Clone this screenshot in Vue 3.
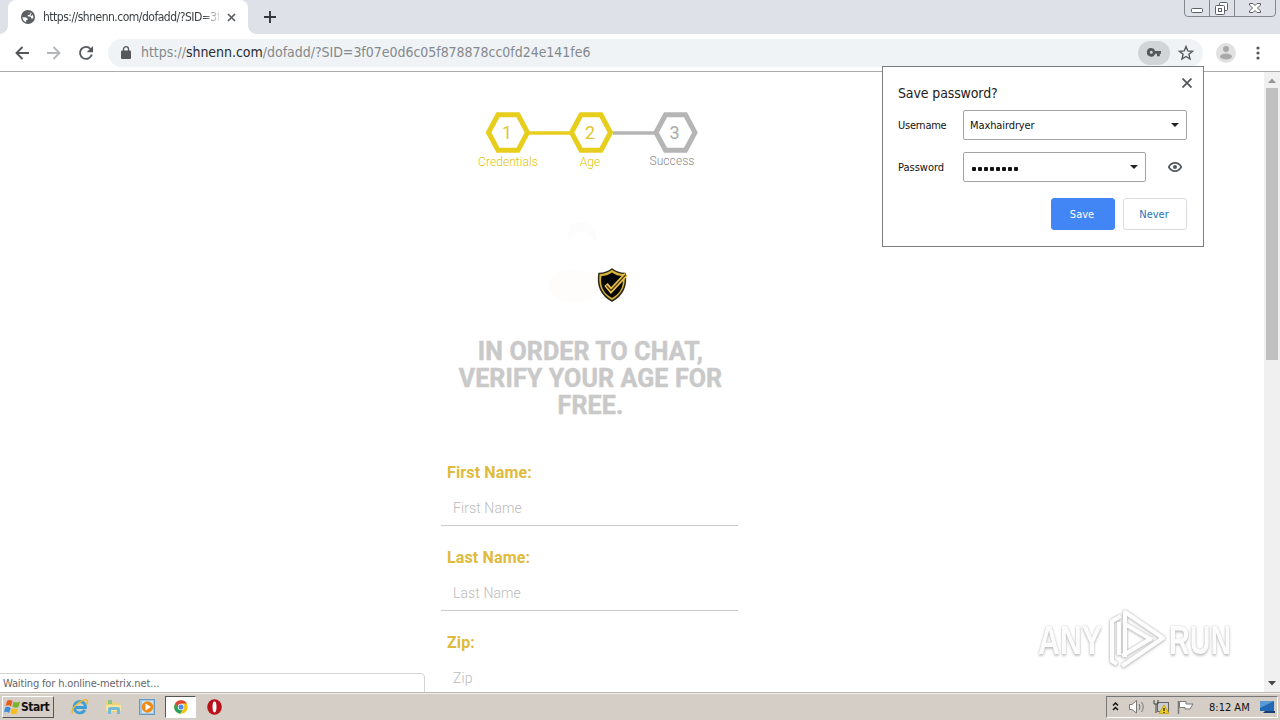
<script setup>
const steps = [
  { n: 1, label: 'Credentials', x: 22, done: true },
  { n: 2, label: 'Age', x: 105, done: true },
  { n: 3, label: 'Success', x: 189.5, done: false },
]
const fields = ['First Name', 'Last Name', 'Zip']
</script>

<template>
  <div class="desktop">
    <header class="tabs">
      <div class="tab">
        <svg class="globe" width="14" height="14" viewBox="0 0 14 14"><circle cx="7" cy="7" r="7" fill="#5a5e62" /><path d="M1.500 7.200H4.500L6.500 8.300V10H5.200V12.300Q1.800 11 1.500 7.200ZM6 2.200H9.600V3.600L8.200 5H6.800V6.400H9.400L10.300 8.500H12.200Q12.600 6.600 11.800 4.800L10.600 6 9.300 5.200 10.800 3.300Q8.800 1.500 6 2.200Z" fill="#fff" /></svg>
        <span class="tab-title">https://shnenn.com/dofadd/?SID=3f</span>
        <svg class="tab-x" width="9" height="9" viewBox="0 0 9 9"><path d="M1 1 8 8M8 1 1 8" stroke="#5a5e62" stroke-width="1.7" /></svg>
      </div>
      <svg class="plus" width="12" height="12" viewBox="0 0 12 12"><path d="M6 0V12M0 6H12" stroke="#34383d" stroke-width="1.9" /></svg>
      <svg class="winbtns" width="94" height="18" viewBox="0 0 94 18" fill="none">
        <path d="M1.500 0V13Q1.500 16.500 5 16.500H89Q92.500 16.500 92.500 13V0M26.500 0V16M51.500 0V16" stroke="#83888f" />
        <rect x="8.500" y="8.500" width="11" height="4" rx="1" fill="#fff" stroke="#5b6068" />
        <rect x="36.500" y="2.500" width="8" height="8" rx="1" fill="#fff" stroke="#5b6068" />
        <rect x="32.500" y="5.500" width="9" height="9" rx="1" fill="#fff" stroke="#5b6068" /><rect x="35.500" y="8.500" width="3" height="3" stroke="#5b6068" />
        <path d="M66.500 3.500H70L72 5.500 74 3.500H77.500V5L74.500 8 77.500 11V12.500H74L72 10.500 70 12.500H66.500V11L69.500 8 66.500 5Z" fill="#fff" stroke="#5b6068" />
      </svg>
    </header>

    <div class="toolbar">
      <svg class="nav" width="94" height="20" viewBox="0 0 94 20" fill="none" stroke-width="1.9">
        <path d="M15 10H2.500M8.500 4 2.500 10 8.500 16" stroke="#54585c" />
        <path d="M33 10H45.500M39.500 4 45.500 10 39.500 16" stroke="#b4b6b8" />
        <path d="M76.600 6A6 6 0 1 0 77.800 11.500" stroke="#54585c" /><path d="M79 3V9.300H72.700Z" fill="#54585c" />
      </svg>
      <div class="omni">
        <svg class="lock" width="10" height="13" viewBox="0 0 10 13"><rect y="4.500" width="10" height="8.500" rx="1" fill="#54585c" /><path d="M2.500 5V3.200A2.500 2.500 0 0 1 7.500 3.200V5" fill="none" stroke="#54585c" stroke-width="1.300" /></svg>
        <span class="url">https://<b>shnenn.com</b>/dofadd/?SID=3f07e0d6c05f878878cc0fd24e141fe6</span>
        <span class="key"><svg width="14" height="9" viewBox="0 0 14 9"><path fill-rule="evenodd" d="M4.300 0A4.300 4.300 0 1 0 8.200 5.700H10V8.300H12.800V5.700H14V2.900H8.200A4.300 4.300 0 0 0 4.300 0ZM4.300 2.800A1.500 1.500 0 1 1 4.300 5.800 1.500 1.500 0 1 1 4.300 2.800Z" fill="#54585c" /></svg></span>
        <svg class="star" width="16" height="16" viewBox="0 0 16 16"><path d="M8 1.500 9.800 5.900 14.500 6.300 10.900 9.300 12 14 8 11.500 4 14 5.100 9.300 1.500 6.300 6.200 5.900Z" fill="none" stroke="#54585c" stroke-width="1.400" /></svg>
      </div>
      <svg class="avatar" width="20" height="20" viewBox="0 0 20 20"><circle cx="10" cy="10" r="10" fill="#e1e1e1" /><circle cx="10" cy="6" r="3" fill="#a9a9a9" /><ellipse cx="10" cy="13.500" rx="6" ry="3" fill="#a9a9a9" /></svg>
      <svg class="dots" width="4" height="14" viewBox="0 0 4 14" fill="#54585c"><circle cx="2" cy="2" r="1.600" /><circle cx="2" cy="7" r="1.600" /><circle cx="2" cy="12" r="1.600" /></svg>
    </div>

    <div class="view">
      <main class="page">
        <svg class="steps" width="212" height="42" viewBox="0 0 212 42">
          <path d="M43 21H85" stroke="#e8ce1c" stroke-width="3.600" /><path d="M127 21H169" stroke="#b5b5b5" stroke-width="3.600" />
          <g v-for="s in steps" :key="s.n" :transform="`translate(${s.x} 20.500)`">
            <path d="M-19.500 0-10-17.700H10L19.500 0 10 17.700H-10Z" fill="#fff" :stroke="s.done ? '#e8ce1c' : '#b5b5b5'" stroke-width="5" />
            <text x="-1" y="6.300" text-anchor="middle" :fill="s.done ? '#dfc72c' : '#aaa'">{{ s.n }}</text>
          </g>
        </svg>
        <div class="labels"><span v-for="s in steps" :key="s.n" :class="{ todo: !s.done }">{{ s.label }}</span></div>
        <svg class="badge" width="90" height="90" viewBox="0 0 90 90">
          <path d="M18 29Q20 8 32 10Q46 8 48 29L44 27Q33 12 22 27Z" fill="#fcfcfc" />
          <ellipse cx="25" cy="74" rx="26" ry="17" fill="#fffdfb" />
          <path d="M63 57Q68 61 76 61.500Q79 80 63 89Q47 80 50 61.500Q58 61 63 57Z" fill="#d9b43b" stroke="#2b2618" stroke-width="1.500" />
          <path d="M63 60.500Q68 64 73.500 64Q76 79 63 86Q50 79 52.500 64Q58 64 63 60.500Z" fill="#050505" />
          <path d="M57 72.500 62 78.500 77 62.500" fill="none" stroke="#edc34b" stroke-width="4.500" /><path d="M57.500 73.500 62 78.500 77 62.500" fill="none" stroke="#4c3b13" stroke-width="1.200" />
        </svg>
        <h1>IN ORDER TO CHAT,<br />VERIFY YOUR AGE FOR<br />FREE.</h1>
        <div v-for="f in fields" :key="f" class="field">
          <label>{{ f }}:</label>
          <div class="input">{{ f }}</div>
        </div>
      </main>
      <div class="scroll">
        <svg width="16" height="16" viewBox="0 0 16 16"><path d="M4 11H12L8 6.500Z" fill="#969696" /></svg>
        <div class="thumb"></div>
        <svg class="down" width="16" height="17" viewBox="0 0 16 17"><path d="M4 6H12L8 10.500Z" fill="#484848" /></svg>
      </div>
      <div class="status">Waiting for h.online-metrix.net...</div>
      <div class="watermark">
        <span class="any">ANY</span>
        <svg width="60" height="66" viewBox="0 0 60 66" fill="none" stroke-linejoin="round">
          <g class="glow" stroke="#fdfdfd" stroke-width="4">
            <path d="M18 50V5L56 31 15 59" /><path d="M18 17 45 33" /><path d="M14 9 5 14V54L10 57" /><path d="M12 15V48" />
            <path d="M15 49 43 32" />
          </g>
        </svg>
        <span class="run">RUN</span>
      </div>
    </div>

    <footer class="taskbar">
      <div class="start">
        <svg width="17" height="16" viewBox="0 0 17 16"><path d="M3 2Q6 0 8.500 2L7 7.500Q4.500 5.500 1.500 7Z" fill="#e75d21" /><path d="M9.500 2.500Q12 4.500 16 2.500L14.500 8Q11 9.500 8.300 7.500Z" fill="#78b52d" /><path d="M1.200 8.500Q4 7 6.700 9L5 14Q2.500 12 0 13.500Z" fill="#3b8ede" /><path d="M7.800 9Q10.500 11 14 9.500L12.500 14.500Q9 16 6.200 14Z" fill="#f7bd20" /></svg>
        <span>Start</span>
      </div>
      <svg class="ti ie" width="18" height="18" viewBox="0 0 18 18" fill="none"><path d="M13.800 12A5.700 5.700 0 1 1 14.500 9.500H4" stroke="#3a9ed8" stroke-width="2.800" /><path d="M1.500 15.500C-1 10 13-1 16.500 2.500Q17 4 15.500 6" stroke="#ecb934" stroke-width="1.500" /></svg>
      <svg class="ti folder" width="17" height="18" viewBox="0 0 17 18"><path d="M1 3H7L8.500 5H15V14H1Z" fill="#ecd076" /><path d="M3 2H7V6H3Z" fill="#8ac486" /><path d="M1 7H16V13H1Z" fill="#f6e59c" /><path d="M3 16V11Q3 9 6 9H12Q15 9 15 11V16H12V12H6V16Z" fill="#73b9dc" /></svg>
      <svg class="ti media" width="17" height="17" viewBox="0 0 17 17"><rect x=".500" y=".500" width="15" height="15" fill="#9fc9e7" stroke="#659bc3" /><rect x="3" y="2" width="11" height="12" fill="#d3e6f2" /><circle cx="8.500" cy="8" r="5.800" fill="#ef8c18" /><path d="M6.500 4.500 12 8 6.500 11.500Z" fill="#fff" /></svg>
      <div class="active-app"><svg width="14" height="14" viewBox="0 0 14 14"><circle cx="7" cy="7" r="6.800" fill="#f6c51d" /><path d="M1.100 3.600A6.800 6.800 0 0 1 12.900 3.600H7L4.200 8.500Z" fill="#dc4437" /><path d="M1.100 3.600A6.800 6.800 0 0 0 6.200 13.800L9.500 8.500H4.100Z" fill="#28a15b" /><circle cx="7" cy="7" r="3.200" fill="#fff" /><circle cx="7" cy="7" r="2.500" fill="#4c8bea" /></svg></div>
      <svg class="ti" width="15" height="16" viewBox="0 0 15 16"><ellipse cx="7.500" cy="8" rx="7.300" ry="7.800" fill="#b9121b" /><ellipse cx="7.500" cy="8" rx="2" ry="5.400" fill="#fff" /></svg>
      <div class="tray">
        <svg width="92" height="18" viewBox="0 0 92 18" fill="none">
          <path d="M6 7.500 8.500 5 11 7.500M6 12 8.500 9.500 11 12" stroke="#111" stroke-width="1.500" />
          <path d="M22.500 6.500H25L29.500 2.500V15L25 11.500H22.500Z" fill="#fff" stroke="#777" /><path d="M32 6Q34 9 32 12M34.500 4Q38 9 34.500 14" stroke="#777" />
          <rect x="50.500" y="4.500" width="11" height="9" fill="#c9cdd0" stroke="#666" /><path d="M47 2V6H51V2M49 6V15" stroke="#444" /><path d="M52 15.500 57 7 62 15.500Z" fill="#f1cf21" stroke="#c9a71f" /><path d="M57 10V13M57 14V15" stroke="#222" stroke-width="1.300" />
          <path d="M71.500 3V16" stroke="#777" stroke-width="1.500" /><path d="M72.500 3.500H79V6H86L83 11H78V9.500H72.500Z" fill="#fff" stroke="#777" />
        </svg>
        <span class="clock">8:12 AM</span>
        <svg width="16" height="14" viewBox="0 0 16 14"><path d="M0 1H14V11H0Z" fill="#2269b5" /><path d="M0 1H14L0 8Z" fill="#5a9bd3" /><path d="M5 11H15V13H3Z" fill="#17406e" /></svg>
      </div>
    </footer>

    <section class="popup">
      <svg class="close" width="10" height="10" viewBox="0 0 10 10"><path d="M.500.500 9.500 9.500M9.500.500.500 9.500" stroke="#54585c" stroke-width="1.800" /></svg>
      <div class="heading">Save password?</div>
      <div class="row"><span class="lab">Username</span><div class="combo"><span class="user">Maxhairdryer</span><i class="arrow"></i></div></div>
      <div class="row second"><span class="lab pw">Password</span><div class="combo short"><span class="bullets"><i v-for="n in 8" :key="n"></i></span><i class="arrow"></i></div>
        <svg class="eye" width="14" height="10" viewBox="0 0 14 10"><path d="M.700 5Q3 .900 7 .900T13.300 5Q11 9.100 7 9.100T.700 5Z" fill="none" stroke="#54585c" stroke-width="1.700" /><circle cx="7" cy="5" r="2" fill="#54585c" /></svg>
      </div>
      <div class="actions"><button class="save">Save</button><button>Never</button></div>
    </section>
  </div>
</template>

<style>
body { margin: 0; overflow: hidden; }
</style>

<style scoped>
* { box-sizing: border-box; }
svg { display: block; flex: none; }
.desktop { position: relative; width: 1280px; height: 720px; display: flex; flex-direction: column; background: #fff; overflow: hidden; font: 11px "DejaVu Sans Condensed", "DejaVu Sans", sans-serif; font-stretch: condensed; white-space: nowrap; color: #111; }
.tabs { height: 34px; flex: none; display: flex; background: #dee1e8; }
.tab { position: relative; width: 240px; height: 34px; margin-left: 8px; padding-left: 13px; border-radius: 8px 8px 0 0; background: #fff; display: flex; align-items: center; }
.tab::before, .tab::after { content: ""; position: absolute; bottom: 0; width: 8px; height: 8px; }
.tab::before { left: -8px; background: radial-gradient(circle at 0 0, #dee1e8 7.5px, #fff 8px); }
.tab::after { right: -8px; background: radial-gradient(circle at 100% 0, #dee1e8 7.5px, #fff 8px); }
.tab-title { width: 176px; margin-left: 8px; font-size: 12px; color: #3c4043; letter-spacing: -.5px; mask-image: linear-gradient(90deg, #000 160px, transparent 179px); }
.tab-x { margin-left: 8px; }
.plus { margin: 11px 0 0 16px; }
.winbtns { margin: 0 3px 0 auto; }
.toolbar { height: 38px; flex: none; display: flex; align-items: center; padding-left: 14px; border-bottom: 1px solid #ababab; }
.omni { width: 1095px; height: 28px; border-radius: 14px; background: #f0f3f5; display: flex; align-items: center; }
.lock { margin: 0 10px 0 13px; }
.url { font-size: 14px; color: #84898c; letter-spacing: -.03px; padding-bottom: 2px; }
.url b { font-weight: 400; color: #2b2c30; }
.key { width: 32px; height: 24px; border-radius: 12px; background: #d2d5d7; margin-left: auto; display: flex; align-items: center; justify-content: center; }
.star { margin: 0 9px 0 8px; }
.avatar { margin-left: 13px; }
.dots { margin-left: 20px; }
.view { position: relative; flex: 1; min-height: 0; display: flex; overflow: hidden; }
.page { width: 297px; margin-left: 441px; font-family: Roboto, sans-serif; font-stretch: normal; }
.steps { margin: 40px 0 0 45px; }
.steps text { font: 18px Roboto, sans-serif; }
.labels { display: grid; grid-template-columns: 82px 82px 82px; margin: 0 0 0 26px; height: 16px; line-height: 16px; text-align: center; font-size: 12px; font-weight: 300; color: #dfc300; letter-spacing: .07px; }
.labels .todo { color: #888; position: relative; top: -1px; }
.badge { margin: 42px 0 0 108px; }
h1 { margin: 36px 0 0; width: 299px; text-align: center; font: 700 25px/27px Roboto, sans-serif; letter-spacing: .13px; color: #c9c9c9; -webkit-text-stroke: .5px #c9c9c9; }
.field { height: 85px; }
h1 + .field { margin-top: 39px; }
.field label { display: block; height: 32px; padding: 1px 0 0 6px; font: 700 16px/28px Roboto, sans-serif; letter-spacing: .14px; color: #dfba3c; }
.input { height: 36px; border-bottom: 1px solid #c9c9c9; padding: 5px 0 0 12px; font: 300 14px/26px Roboto, sans-serif; letter-spacing: .1px; color: #bcbcbc; }
.scroll { width: 16px; margin-left: auto; background: #f0f0f0; display: flex; flex-direction: column; align-items: center; }
.thumb { width: 12px; height: 272px; background: #c1c1c1; }
.down { margin-top: auto; }
.status { position: absolute; left: -1px; bottom: -1px; width: 426px; height: 20px; border: 1px solid #d5d5d5; border-radius: 0 4px 0 0; background: #fff; padding-left: 3px; line-height: 19px; color: #666; letter-spacing: -.15px; }
.watermark { position: absolute; left: 1038px; top: 535px; display: flex; align-items: center; }
.watermark span { font: 700 41px/50px "Liberation Sans", sans-serif; transform-origin: left; color: #fcfcfc; text-shadow: 0 0 2px #bbb, 0 2px 3px #c5c5c5; }
.glow { filter: drop-shadow(0 0 1px #bbb) drop-shadow(0 1px 1px #ccc); }
.watermark .any { width: 68px; transform: scaleX(.74); margin-right: 1px; }
.watermark .run { width: 66px; transform: scaleX(.7); margin-left: 2px; }
.taskbar { height: 28px; flex: none; display: flex; align-items: center; background: #d5cec6; border-top: 1px solid #b8b6a8; box-shadow: inset 0 1px #f4f2ed; padding: 1px 2px 0; }
.start { width: 52px; height: 22px; padding-left: 1px; display: flex; align-items: center; border: 1px solid; border-color: #fff #555 #555 #fff; font: bold 12px "DejaVu Sans Condensed", sans-serif; letter-spacing: -.5px; }
.ti { margin-left: 17px; }
.folder { margin-left: 16px; }
.active-app { width: 31px; height: 22px; margin-left: 9px; background: #fff; border: 1px solid; border-color: #555 #fff #fff #555; display: flex; align-items: center; justify-content: center; }
.active-app + .ti { margin-left: 11px; }
.tray { width: 172px; height: 22px; margin-left: auto; border: 1px solid; border-color: #777 #fff #fff #777; display: flex; align-items: center; }
.clock { width: 42px; margin: 0 9px 0 10px; }
.popup { position: absolute; left: 882px; top: 66px; width: 322px; height: 181px; background: #fff; border: 1px solid #7d7d7d; padding: 17px 16px 0 15px; }
.close { position: absolute; right: 11px; top: 11px; }
.heading { font-size: 14px; line-height: 18px; letter-spacing: -.13px; color: #222; }
.row { height: 30px; margin-top: 8px; display: flex; align-items: center; }
.second { margin-top: 12px; }
.lab { width: 65px; letter-spacing: -.25px; }
.pw { letter-spacing: 0; }
.user { letter-spacing: -.1px; }
.combo { width: 224px; height: 30px; border: 1px solid #a4a4a4; border-radius: 2px; padding: 0 7px 0 6px; display: flex; align-items: center; justify-content: space-between; }
.short { width: 183px; }
.arrow { border: 4.5px solid transparent; border-top-color: #222; border-bottom: 0; }
.bullets { display: flex; gap: 2px; padding: 3px 0 0 2px; }
.bullets i { width: 4px; height: 4px; border-radius: 1px; background: #111; }
.eye { margin-left: 22px; }
.actions { display: flex; justify-content: flex-end; gap: 8px; margin-top: 16px; }
button { width: 64px; height: 32px; border: 1px solid #d9dce0; border-radius: 3px; background: #fff; color: #2672c4; padding: 0 2px 0 0; font: 11px "DejaVu Sans Condensed", sans-serif; }
.save { background: #4285f4; border-color: #4285f4; color: #fff; }
</style>
